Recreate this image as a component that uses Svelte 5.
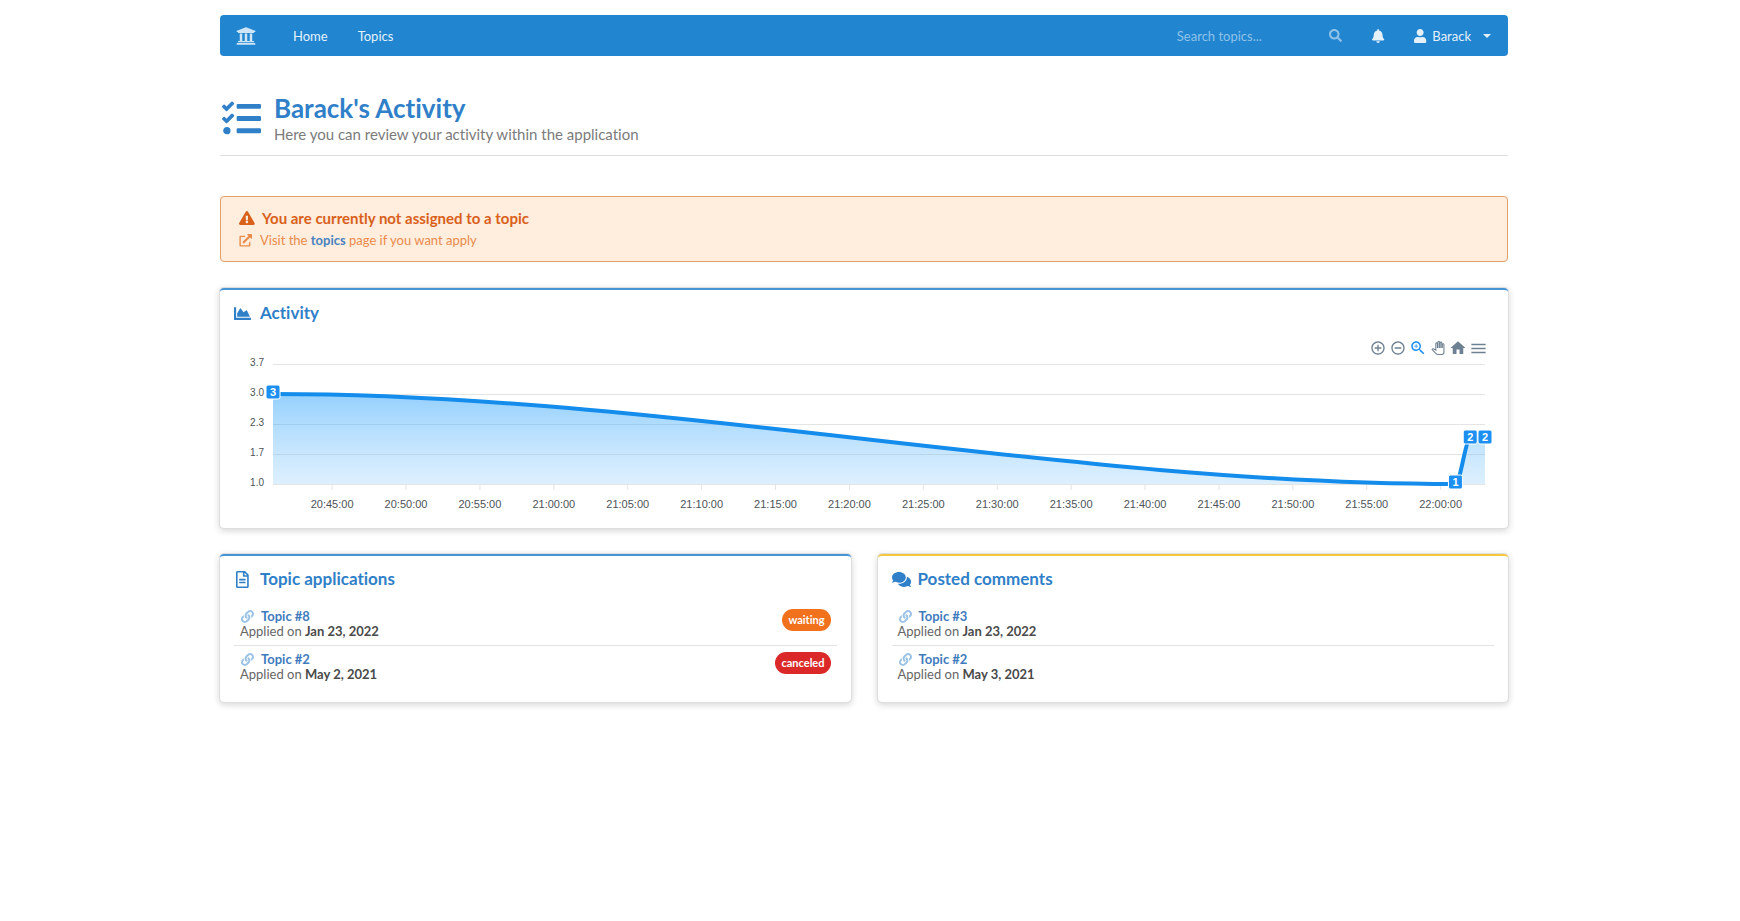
<script>
  const icons = {
    university: { w: 512, d: 'M496 128v16a8 8 0 0 1-8 8h-24v12c0 6.627-5.373 12-12 12H60c-6.627 0-12-5.373-12-12v-12H24a8 8 0 0 1-8-8v-16a8 8 0 0 1 4.941-7.392l232-88a7.996 7.996 0 0 1 6.118 0l232 88A8 8 0 0 1 496 128zm-24 304H40c-13.255 0-24 10.745-24 24v16a8 8 0 0 0 8 8h464a8 8 0 0 0 8-8v-16c0-13.255-10.745-24-24-24zM96 192v192H60c-6.627 0-12 5.373-12 12v20h416v-20c0-6.627-5.373-12-12-12h-36V192h-64v192h-64V192h-64v192h-64V192H96z' },
    search: { w: 512, d: 'M505 442.7L405.3 343c-4.5-4.5-10.6-7-17-7H372c27.6-35.3 44-79.7 44-128C416 93.1 322.9 0 208 0S0 93.1 0 208s93.1 208 208 208c48.3 0 92.7-16.4 128-44v16.3c0 6.4 2.5 12.5 7 17l99.7 99.7c9.4 9.4 24.6 9.4 33.9 0l28.3-28.3c9.4-9.4 9.4-24.6.1-34zM208 336c-70.7 0-128-57.2-128-128 0-70.7 57.2-128 128-128 70.7 0 128 57.2 128 128 0 70.7-57.2 128-128 128z' },
    bell: { w: 448, d: 'M224 512c35.32 0 63.97-28.65 63.97-64H160.03c0 35.35 28.65 64 63.97 64zm215.39-149.71c-19.32-20.76-55.47-51.99-55.47-154.29 0-77.7-54.48-139.9-127.94-155.16V32c0-17.67-14.32-32-31.98-32s-31.98 14.33-31.98 32v20.84C118.56 68.1 64.08 130.3 64.08 208c0 102.3-36.15 133.53-55.47 154.29-6 6.45-8.66 14.16-8.61 21.71.11 16.4 12.98 32 32.1 32h383.8c19.12 0 32-15.6 32.1-32 .05-7.55-2.61-15.27-8.61-21.71z' },
    user: { w: 448, d: 'M224 256c70.7 0 128-57.3 128-128S294.7 0 224 0 96 57.3 96 128s57.3 128 128 128zm89.6 32h-16.7c-22.2 10.2-46.9 16-72.9 16s-50.6-5.8-72.9-16h-16.7C60.2 288 0 348.2 0 422.4V464c0 26.5 21.5 48 48 48h352c26.5 0 48-21.5 48-48v-41.6c0-74.2-60.2-134.4-134.4-134.4z' },
    tasks: { w: 512, d: 'M139.61 35.5a12 12 0 0 0-17 0L58.93 98.81l-22.7-22.12a12 12 0 0 0-17 0L3.53 92.41a12 12 0 0 0 0 17l47.59 47.4a12.78 12.78 0 0 0 17.61 0l15.59-15.62L156.52 69a12.09 12.09 0 0 0 .09-17zm0 159.19a12 12 0 0 0-17 0l-63.68 63.72-22.7-22.1a12 12 0 0 0-17 0L3.53 252a12 12 0 0 0 0 17L51 316.5a12.77 12.77 0 0 0 17.6 0l15.7-15.69 72.2-72.22a12 12 0 0 0 .09-16.9zM64 368c-26.49 0-48.59 21.5-48.59 48S37.53 464 64 464a48 48 0 0 0 0-96zm432 16H208a16 16 0 0 0-16 16v32a16 16 0 0 0 16 16h288a16 16 0 0 0 16-16v-32a16 16 0 0 0-16-16zm0-320H208a16 16 0 0 0-16 16v32a16 16 0 0 0 16 16h288a16 16 0 0 0 16-16V80a16 16 0 0 0-16-16zm0 160H208a16 16 0 0 0-16 16v32a16 16 0 0 0 16 16h288a16 16 0 0 0 16-16v-32a16 16 0 0 0-16-16z' },
    warning: { w: 576, d: 'M569.517 440.013C587.975 472.007 564.806 512 527.94 512H48.054c-36.937 0-59.999-40.055-41.577-71.987L246.423 23.985c18.467-32.009 64.72-31.951 83.154 0l239.94 416.028zM288 354c-25.405 0-46 20.595-46 46s20.595 46 46 46 46-20.595 46-46-20.595-46-46-46zm-43.673-165.346l7.418 136c.347 6.364 5.609 11.346 11.982 11.346h48.546c6.373 0 11.635-4.982 11.982-11.346l7.418-136c.375-6.874-5.098-12.654-11.982-12.654h-63.383c-6.884 0-12.356 5.78-11.981 12.654z' },
    external: { w: 512, d: 'M448 288v160c0 26.500-21.500 48-48 48H64c-26.500 0-48-21.500-48-48V112c0-26.500 21.500-48 48-48h176v56H80c-4.400 0-8 3.600-8 8v304c0 4.400 3.600 8 8 8h304c4.400 0 8-3.600 8-8V344zM488 0H352c-21 0-32 26-17 41l38 38-226 226c-9 9-9 24 0 34l26 26c9 9 24 9 34 0l226-226 38 38c15 15 41 4 41-17V24c0-13-11-24-24-24z' },
    area: { w: 512, d: 'M500 384c6.6 0 12 5.4 12 12v40c0 6.6-5.4 12-12 12H12c-6.6 0-12-5.4-12-12V76c0-6.6 5.4-12 12-12h40c6.6 0 12 5.4 12 12v308h436zM372.7 159.5L288 216l-85.3-113.7c-5.1-6.8-15.5-6.3-19.9 1L96 248v104h384l-89.9-187.8c-3.2-6.5-11.4-8.7-17.4-4.7z' },
    file: { w: 384, d: 'M288 248v28c0 6.6-5.4 12-12 12H108c-6.6 0-12-5.4-12-12v-28c0-6.6 5.4-12 12-12h168c6.6 0 12 5.4 12 12zm-12 72H108c-6.600 0-12 5.400-12 12v28c0 6.600 5.400 12 12 12h168c6.600 0 12-5.400 12-12v-28c0-6.600-5.400-12-12-12zm108-188.100V464c0 26.500-21.500 48-48 48H48c-26.500 0-48-21.500-48-48V48C0 21.500 21.500 0 48 0h204.100C264.800 0 277 5.100 286 14.100L369.900 98c9 8.900 14.100 21.200 14.100 33.900zm-128-80V128h76.100L256 51.900zM336 464V176H232c-13.300 0-24-10.700-24-24V48H48v416h288z' },
    comments: { w: 576, d: 'M416 192c0-88.400-93.100-160-208-160S0 103.600 0 192c0 34.300 14.100 65.900 38 92-13.400 30.200-35.500 54.200-35.800 54.500-2.200 2.300-2.800 5.700-1.500 8.700S4.800 352 8 352c36.600 0 66.900-12.300 88.700-25 32.200 15.700 70.300 25 111.300 25 114.900 0 208-71.600 208-160zm122 220c23.900-26 38-57.700 38-92 0-66.900-53.500-124.200-129.300-148.100.9 6.600 1.300 13.300 1.300 20.100 0 105.900-107.700 192-240 192-10.800 0-21.300-.8-31.700-1.900C207.800 439.600 281.800 480 368 480c41 0 79.100-9.200 111.300-25 21.800 12.700 52.100 25 88.700 25 3.200 0 6.100-1.900 7.300-4.800 1.300-2.900.7-6.300-1.500-8.700-.3-.3-22.400-24.200-35.800-54.500z' },
    link: { w: 512, d: 'M326.612 185.391c59.747 59.809 58.927 155.698.36 214.59-.11.12-.24.25-.36.37l-67.2 67.2c-59.27 59.27-155.699 59.262-214.96 0-59.27-59.26-59.27-155.7 0-214.96l37.106-37.106c9.84-9.84 26.786-3.3 27.294 10.606.648 17.722 3.826 35.527 9.69 52.721 1.986 5.822.567 12.262-3.783 16.612l-13.087 13.087c-28.026 28.026-28.905 73.66-1.155 101.96 28.024 28.579 74.086 28.749 102.325.51l67.2-67.19c28.191-28.191 28.073-73.757 0-101.83-3.701-3.694-7.429-6.564-10.341-8.569a16.037 16.037 0 0 1-6.947-12.606c-.396-10.567 3.348-21.456 11.698-29.806l21.054-21.055c5.521-5.521 14.182-6.199 20.584-1.731a152.482 152.482 0 0 1 20.522 17.197zM467.547 44.449c-59.261-59.262-155.69-59.27-214.96 0l-67.2 67.2c-.12.12-.25.25-.36.37-58.566 58.892-59.387 154.781.36 214.59a152.454 152.454 0 0 0 20.521 17.196c6.402 4.468 15.064 3.789 20.584-1.731l21.054-21.055c8.35-8.35 12.094-19.239 11.698-29.806a16.037 16.037 0 0 0-6.947-12.606c-2.912-2.005-6.64-4.875-10.341-8.569-28.073-28.073-28.191-73.639 0-101.83l67.2-67.19c28.239-28.239 74.3-28.069 102.325.51 27.75 28.3 26.872 73.934-1.155 101.96l-13.087 13.087c-4.35 4.35-5.769 10.79-3.783 16.612 5.864 17.194 9.042 34.999 9.69 52.721.509 13.906 17.454 20.446 27.294 10.606l37.106-37.106c59.271-59.259 59.271-155.699.001-214.959z' }
  };

  const ring = 'M12 2C6.48 2 2 6.480 2 12s4.480 10 10 10 10-4.480 10-10S17.520 2 12 2zm0 18c-4.410 0-8-3.590-8-8s3.590-8 8-8 8 3.590 8 8-3.590 8-8 8z';
  const tools = [
    { label: 'Zoom in', size: 16, d: 'M13 7h-2v4H7v2h4v4h2v-4h4v-2h-4V7z' + ring },
    { label: 'Zoom out', size: 16, d: 'M7 11v2h10v-2H7z' + ring },
    { label: 'Selection zoom', size: 18, active: true, d: 'M15.5 14h-.79l-.28-.27C15.41 12.59 16 11.11 16 9.5 16 5.91 13.09 3 9.5 3S3 5.91 3 9.5 5.910 16 9.5 16c1.61 0 3.090-.59 4.230-1.570l.27.28v.79l5 4.990L20.490 19l-4.990-5zm-6 0C7.010 14 5 11.990 5 9.5S7.010 5 9.5 5 14 7.010 14 9.5 11.990 14 9.5 14zM12 10h-2v2H9v-2H7V9h2V7h1v2h2v1z' },
    { label: 'Panning', size: 14, outline: true, d: 'M23 5.5V20c0 2.200-1.800 4-4 4h-7.300c-1.080 0-2.100-.43-2.850-1.190L1 14.830s1.260-1.230 1.300-1.250c.22-.19.49-.29.79-.29.22 0 .42.06.6.16.04.01 4.310 2.460 4.310 2.460V4c0-.83.67-1.500 1.500-1.500S11 3.170 11 4v7h1V1.500c0-.83.67-1.500 1.500-1.500S15 .67 15 1.500V11h1V2.500c0-.83.67-1.500 1.500-1.500s1.500.67 1.500 1.500V11h1V5.500c0-.83.67-1.500 1.500-1.500s1.500.67 1.500 1.500z' },
    { label: 'Reset zoom', size: 18, d: 'M10 20v-6h4v6h5v-8h3L12 3 2 12h3v8z' },
    { label: 'Menu', size: 19, d: 'M3 18h18v-2H3v2zm0-5h18v-2H3v2zm0-7v2h18V6H3z' }
  ];

  // Minutes are counted from 20:41.
  const points = [
    { t: 0, v: 3 },
    { t: 80, v: 1 },
    { t: 81, v: 2 },
    { t: 82, v: 2 }
  ];
  const yLabels = ['3.7', '3.0', '2.3', '1.7', '1.0'];
  const ticks = Array.from({ length: 16 }, (_, i) => {
    const m = 45 + i * 5;
    const h = 20 + Math.floor(m / 60);
    return { t: 4 + i * 5, text: `${h}:${String(m % 60).padStart(2, '0')}:00` };
  });

  const left = 39;
  const top = 6;
  const step = 30;
  const base = top + step * 4;
  let width = $state(1260);
  let right = $derived(width - 9);
  const px = (t) => left + ((right - left) * t) / 82;
  const py = (v) => base - (v - 1) * step * 1.5;
  let line = $derived(
    points.reduce((path, p, i) => {
      if (i === 0) return `M${px(p.t)} ${py(p.v)}`;
      const q = points[i - 1];
      const third = (px(p.t) - px(q.t)) / 3;
      return `${path}C${px(q.t) + third} ${py(q.v)} ${px(p.t) - third} ${py(p.v)} ${px(p.t)} ${py(p.v)}`;
    }, '')
  );

  const panels = [
    {
      title: 'Topic applications',
      icon: 'file',
      accent: 'blue',
      items: [
        { topic: 'Topic #8', date: 'Jan 23, 2022', status: 'waiting' },
        { topic: 'Topic #2', date: 'May 2, 2021', status: 'canceled' }
      ]
    },
    {
      title: 'Posted comments',
      icon: 'comments',
      accent: 'yellow',
      items: [
        { topic: 'Topic #3', date: 'Jan 23, 2022' },
        { topic: 'Topic #2', date: 'May 3, 2021' }
      ]
    }
  ];
</script>

{#snippet icon(name, size)}
  <svg class="icon" height={size} width={(size * icons[name].w) / 512} viewBox="0 0 {icons[name].w} 512" aria-hidden="true">
    <path d={icons[name].d} />
  </svg>
{/snippet}

<div class="page">
  <nav>
    <a class="brand" href="#home" aria-label="Start page">{@render icon('university', 20)}</a>
    <a class="item" href="#home">Home</a>
    <a class="item" href="#topics">Topics</a>
    <form class="search" onsubmit={(e) => e.preventDefault()}>
      <input type="text" placeholder="Search topics..." aria-label="Search topics" />
      <button type="submit" aria-label="Search">{@render icon('search', 13)}</button>
    </form>
    <button class="bell" type="button" aria-label="Notifications">{@render icon('bell', 14)}</button>
    <button class="account" type="button">
      {@render icon('user', 14)}
      <span>Barack</span>
      <i class="caret"></i>
    </button>
  </nav>

  <main>
    <header>
      {@render icon('tasks', 39)}
      <div>
        <h1>Barack's Activity</h1>
        <p>Here you can review your activity within the application</p>
      </div>
    </header>

    <section class="notice">
      <h2><span class="slot">{@render icon('warning', 14)}</span>You are currently not assigned to a topic</h2>
      <p><span class="slot">{@render icon('external', 13)}</span>Visit the <a href="#topics">topics</a> page if you want apply</p>
    </section>

    <section class="panel blue">
      <h2><span class="slot">{@render icon('area', 17)}</span>Activity</h2>
      <div class="toolbar">
        {#each tools as tool}
          <button type="button" class:active={tool.active} class:outline={tool.outline} aria-label={tool.label}>
            <svg width={tool.size} height={tool.size} viewBox={tool.outline ? '-1 -1 26 26' : '0 0 24 24'}><path d={tool.d} /></svg>
          </button>
        {/each}
      </div>
      <div class="chart" bind:clientWidth={width}>
        <svg {width} height="156" role="img" aria-label="Activity over time">
          <defs>
            <linearGradient id="fill" x1="0" y1="0" x2="0" y2="1">
              <stop offset="0" stop-color="#008ffb" stop-opacity="0.42" />
              <stop offset="1" stop-color="#7cc4fb" stop-opacity="0.26" />
            </linearGradient>
          </defs>
          {#each yLabels as text, i}
            <line class="grid" x1={left} x2={right} y1={top + i * step + 0.5} y2={top + i * step + 0.5} />
            <text class="ylabel" x={left - 9} y={top + i * step + 2}>{text}</text>
          {/each}
          {#each ticks as tick}
            <line class="grid" x1={px(tick.t)} x2={px(tick.t)} y1={base} y2={base + 6} />
            <text class="xlabel" x={px(tick.t)} y={base + 24}>{tick.text}</text>
          {/each}
          <path d="{line}V{base}H{left}Z" fill="url(#fill)" />
          <path class="line" d={line} />
          {#each points as p}
            <rect class="mark" x={px(p.t) - 7} y={py(p.v) - 9} width="14" height="14" rx="2" />
            <text class="value" x={px(p.t)} y={py(p.v) + 2}>{p.v}</text>
          {/each}
        </svg>
      </div>
    </section>

    <div class="columns">
      {#each panels as panel}
        <section class="panel {panel.accent}">
          <h2><span class="slot">{@render icon(panel.icon, 17)}</span>{panel.title}</h2>
          <ul>
            {#each panel.items as item}
              <li>
                <div>
                  <a href="#topic">{@render icon('link', 13)}{item.topic}</a>
                  <p>Applied on <b>{item.date}</b></p>
                </div>
                {#if item.status}<span class="pill {item.status}">{item.status}</span>{/if}
              </li>
            {/each}
          </ul>
        </section>
      {/each}
    </div>
  </main>
</div>

<style>
  :global(body) {
    background: #fff;
    color: #4a4a4a;
    font-family: Lato, sans-serif;
    font-size: 13px;
    font-variant-ligatures: none;
  }
  .page {
    max-width: 1288px;
    margin: 0 auto;
    padding: 15px 12px 24px 0;
  }
  h1, h2, p, ul {
    margin: 0;
    padding: 0;
  }
  a {
    color: inherit;
    text-decoration: none;
  }
  button, input {
    border: 0;
    padding: 0;
    background: none;
    color: inherit;
    font: inherit;
  }
  svg {
    display: block;
    overflow: visible;
  }
  .icon {
    flex: none;
    fill: currentColor;
  }

  nav {
    display: flex;
    align-items: center;
    height: 41px;
    background: #2185d0;
    border-radius: 4px;
    color: #e4f1fb;
  }
  .brand {
    padding: 0 22px 0 16px;
    color: #cde5f7;
  }
  .item {
    padding: 0 15px;
  }
  .search {
    display: flex;
    align-items: center;
    margin-left: auto;
  }
  .search input {
    width: 152px;
    outline: 0;
  }
  .search input::placeholder {
    color: #90c2e9;
    opacity: 1;
  }
  .search button {
    color: #90c2e9;
  }
  .bell {
    padding: 0 30px;
  }
  .account {
    display: flex;
    align-items: center;
    gap: 6px;
    padding-right: 17px;
  }
  .caret {
    margin-left: 6px;
    border: 4px solid transparent;
    border-top-color: currentColor;
    border-bottom: 0;
  }

  header {
    display: flex;
    align-items: center;
    gap: 13px;
    margin-top: 36px;
    padding: 0 2px 11px;
    border-bottom: 1px solid #dcdddd;
    color: #2f80c8;
  }
  h1 {
    font-size: 26px;
    line-height: 32px;
    font-weight: 700;
  }
  header p {
    color: #7b7b7b;
    font-size: 15px;
    line-height: 20px;
  }

  .notice {
    margin-top: 40px;
    padding: 9px 18px 11px;
    border: 1px solid #e3a06c;
    border-radius: 4px;
    background: #ffeddd;
    color: #e98b4b;
  }
  .notice h2, .notice p {
    display: flex;
    align-items: center;
    white-space: pre;
  }
  .notice h2 {
    color: #d9601a;
    font-size: 15px;
    line-height: 24px;
  }
  .notice p {
    line-height: 20px;
  }
  .notice h2 .slot {
    width: 23px;
  }
  .notice p .slot {
    width: 21px;
  }
  .notice a {
    color: #4883c0;
    font-weight: 700;
  }

  .panel {
    margin-top: 26px;
    padding: 10px 14px 14px;
    border-top: 2px solid #4693d6;
    border-radius: 4px;
    box-shadow: 0 0 0 1px #dededf, 0 2px 6px 1px rgba(34, 36, 38, 0.18);
  }
  .panel.yellow {
    border-top-color: #f5c63f;
  }
  .panel h2 {
    display: flex;
    align-items: center;
    color: #2f80c8;
    font-size: 17px;
    line-height: 26px;
  }
  .panel .slot {
    display: flex;
    width: 26px;
  }
  .panel ul {
    margin-top: 11px;
    list-style: none;
  }
  .panel h2 .slot {
    flex: none;
  }
  .columns .blue .slot {
    box-sizing: border-box;
    padding-left: 2px;
  }

  .toolbar {
    display: flex;
    justify-content: flex-end;
    margin-top: 12px;
    padding-right: 6px;
  }
  .toolbar button {
    display: grid;
    place-items: center;
    width: 20px;
    height: 20px;
    fill: #6e8192;
  }
  .toolbar .active {
    fill: #1e90f5;
  }
  .toolbar .outline {
    fill: none;
    stroke: #6e8192;
    stroke-width: 2;
  }
  .chart {
    font-family: "Liberation Sans", Arial, sans-serif;
  }
  .grid {
    stroke: #e4e4e4;
  }
  .ylabel {
    fill: #4d5358;
    font-size: 10px;
    text-anchor: end;
  }
  .xlabel {
    fill: #4d5358;
    font-size: 11px;
    text-anchor: middle;
  }
  .line {
    fill: none;
    stroke: #138cec;
    stroke-width: 4;
  }
  .mark {
    fill: #1b90f2;
    stroke: #fff;
  }
  .value {
    fill: #fff;
    font-size: 11px;
    font-weight: 700;
    text-anchor: middle;
  }

  .columns {
    display: grid;
    grid-template-columns: 1fr 1fr;
    gap: 27px;
  }
  li {
    display: flex;
    align-items: flex-start;
    justify-content: space-between;
    padding: 6px;
  }
  li + li {
    border-top: 1px solid #e3e3e4;
  }
  li a {
    display: flex;
    align-items: center;
    gap: 7px;
    color: #3f7cbd;
    line-height: 15px;
    font-weight: 700;
  }
  li .icon {
    margin-left: 1px;
    fill: #9cc3e6;
  }
  li p {
    color: #666;
    line-height: 15px;
  }
  li b {
    color: #4a4a4a;
  }
  .pill {
    padding: 0 6px;
    border-radius: 11px;
    color: #fff;
    font-size: 11px;
    line-height: 22px;
    font-weight: 700;
  }
  .waiting {
    background: #f2711c;
  }
  .canceled {
    background: #db2828;
  }
</style>
